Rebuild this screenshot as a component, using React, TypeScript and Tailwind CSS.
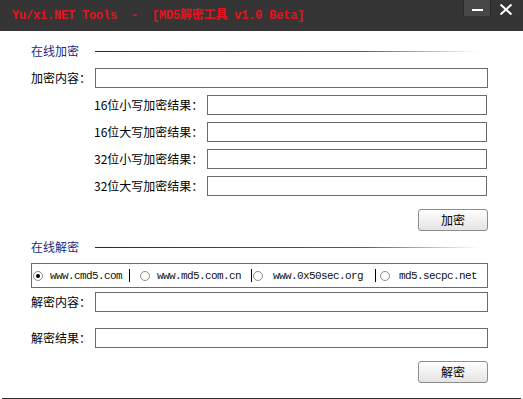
const cjk = "font-['SimSun','Noto_Sans_CJK_SC',sans-serif]";

function SectionHeader({ title }: { title: string }) {
  return (
    <div className="flex h-4 items-center pl-[31px]">
      <span className={`${cjk} w-16 text-[12px] leading-4 text-[#1c2a84]`}>{title}</span>
      <div className="h-px w-[385px] bg-linear-to-r from-[#16237a] via-[#2a6aa6] via-70% to-transparent" />
    </div>
  );
}

function Field({ label, indent = false }: { label: string; indent?: boolean }) {
  return (
    <div className={`flex h-5 items-center ${indent ? "pl-[94px]" : "pl-[31px]"}`}>
      <span className={`${cjk} text-[12px] leading-4 text-black ${indent ? "w-[113px]" : "w-16"}`}>
        {label}
      </span>
      <div className={`h-5 border border-[#6b6b6b] bg-white ${indent ? "w-[280px]" : "w-[393px]"}`} />
    </div>
  );
}

function Button({ label }: { label: string }) {
  return (
    <div className="flex justify-end pr-[35px]">
      <div
        className={`${cjk} flex h-[22px] w-[70px] items-center justify-center rounded-[3px] border border-[#8c8c8c] bg-linear-to-b from-white to-[#e4e4e4] text-[12px] text-black`}
      >
        {label}
      </div>
    </div>
  );
}

function Radio({ checked = false }: { checked?: boolean }) {
  return (
    <span className="flex size-[10px] items-center justify-center rounded-full border border-[#8a8a8a] bg-white">
      {checked ? <span className="size-[4px] rounded-full bg-black" /> : null}
    </span>
  );
}

const mono = "font-['Liberation_Mono',monospace] text-[11px] tracking-[-0.6px] text-[#111] leading-4 whitespace-pre";

export default function App() {
  return (
    <div className="flex h-[399px] w-[523px] flex-col overflow-hidden bg-white">
      {/* title bar */}
      <div className="flex h-[31px] shrink-0 items-start justify-between bg-[#353535]">
        <div className="flex h-[31px] items-center pl-[12px]">
          <span className="whitespace-pre font-['Liberation_Mono','Noto_Sans_CJK_SC',monospace] text-[12px] font-bold tracking-[-0.2px] text-[#e3141f]">
            {"Yu/xi.NET Tools  -  [MD5解密工具 v1.0 Beta]"}
          </span>
        </div>
        <div className="flex pr-[2px]">
          <div className="flex h-[16px] w-[28px] items-center justify-center border-x border-[#2a2a2a] bg-[#474747]">
            <span className="mt-[4px] h-[2px] w-[11px] bg-white" />
          </div>
          <div className="flex h-[18px] w-[30px] items-center justify-center">
            <svg width="14" height="11" viewBox="0 0 14 11" className="mt-[1px]">
              <path d="M1.5 0.5 L12.5 10.5 M12.5 0.5 L1.5 10.5" stroke="white" strokeWidth="2" fill="none" />
            </svg>
          </div>
        </div>
      </div>

      <div className="mt-[12px] flex flex-col">
        <SectionHeader title="在线加密" />
        <div className="mt-[9px] flex flex-col gap-[7px]">
          <Field label="加密内容：" />
          <Field label="16位小写加密结果：" indent />
          <Field label="16位大写加密结果：" indent />
          <Field label="32位小写加密结果：" indent />
          <Field label="32位大写加密结果：" indent />
        </div>
        <div className="mt-[13px]">
          <Button label="加密" />
        </div>

        <div className="mt-[8px]">
          <SectionHeader title="在线解密" />
        </div>

        <div className="mt-[8px] pl-[31px]">
          <div className="flex h-[25px] w-[457px] items-center border border-[#6b6b6b]">
            <span className="ml-[1px]"><Radio checked /></span>
            <span className={`${mono} ml-[7px]`}>www.cmd5.com</span>
            <span className="ml-[7px] h-[13px] w-px bg-black" />
            <span className="ml-[10px]"><Radio /></span>
            <span className={`${mono} ml-[7px]`}>www.md5.com.cn</span>
            <span className="ml-[10px] h-[13px] w-px bg-black" />
            <span className="ml-[1px]"><Radio /></span>
            <span className={`${mono} ml-[10px]`}>www.0x50sec.org</span>
            <span className="ml-[12px] h-[13px] w-px bg-black" />
            <span className="ml-[4px]"><Radio /></span>
            <span className={`${mono} ml-[9px]`}>md5.secpc.net</span>
          </div>
        </div>

        <div className="mt-[4px]">
          <Field label="解密内容：" />
        </div>
        <div className="mt-[16px]">
          <Field label="解密结果：" />
        </div>
        <div className="mt-[13px]">
          <Button label="解密" />
        </div>
      </div>

      <div className="mt-auto mx-[2px] h-px shrink-0 bg-[#2e2e2e]" />
    </div>
  );
}
